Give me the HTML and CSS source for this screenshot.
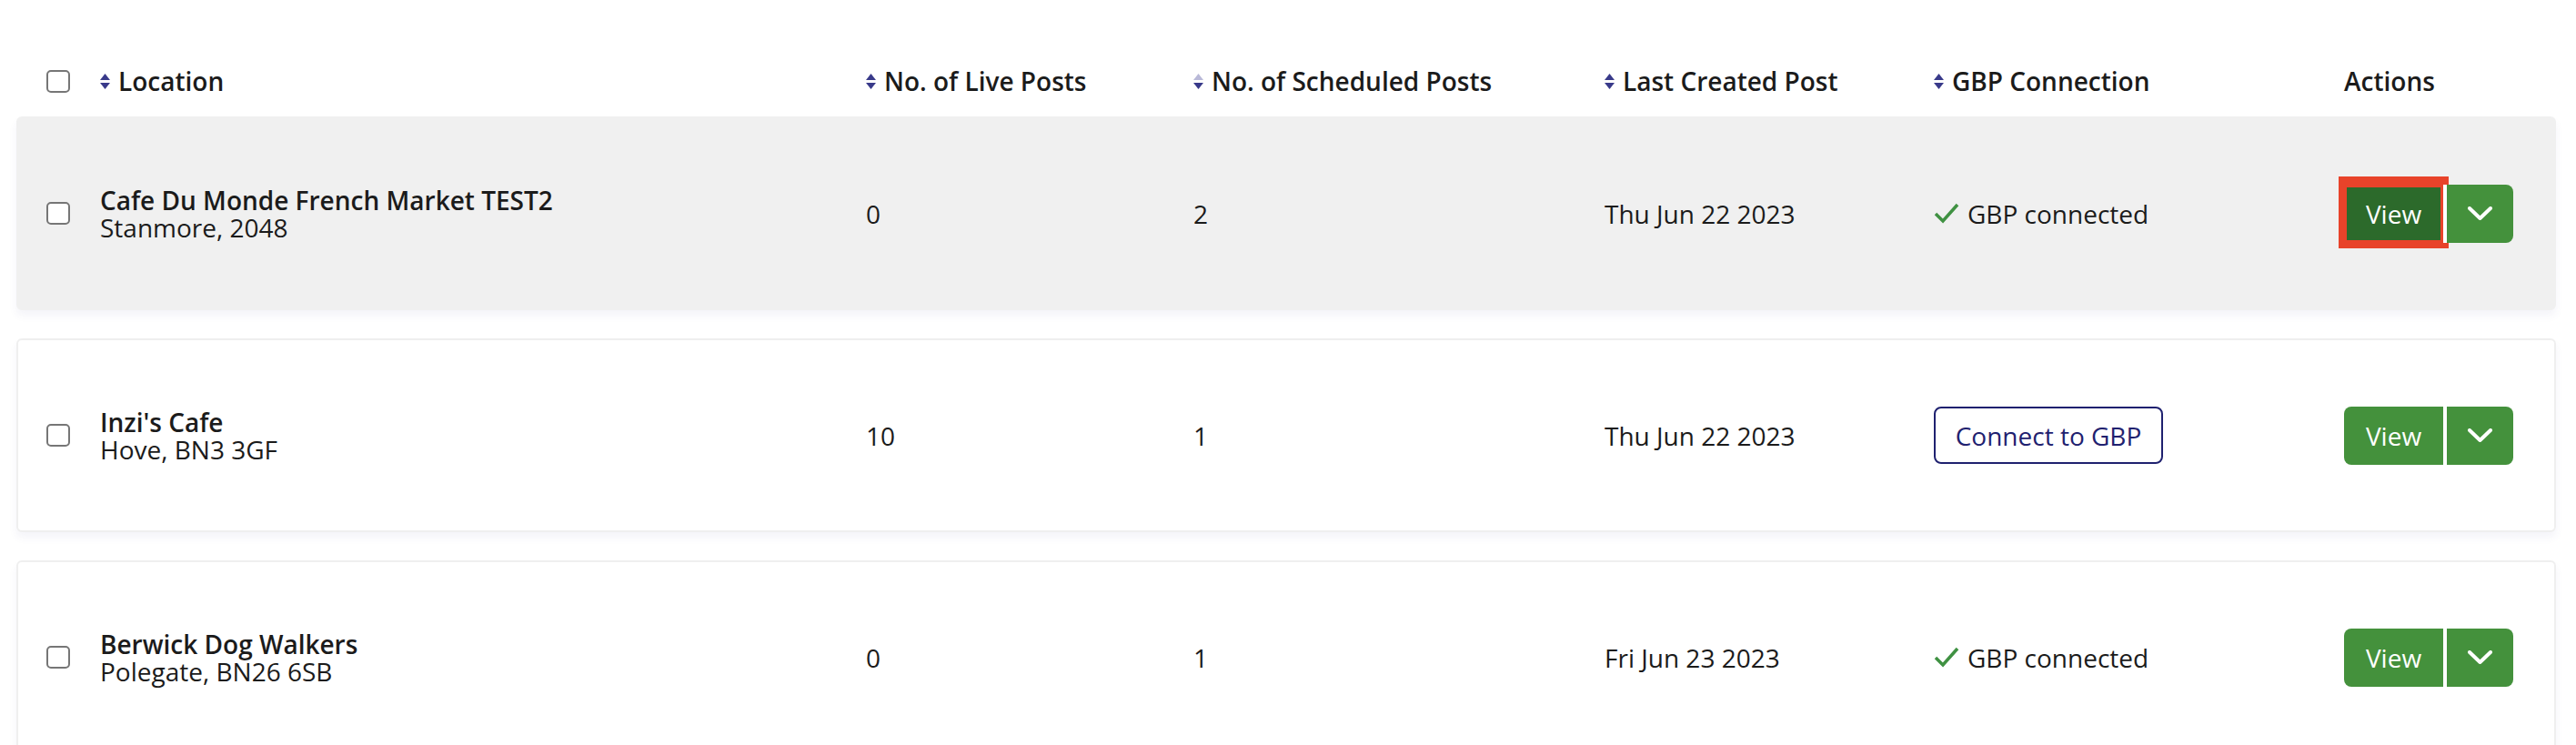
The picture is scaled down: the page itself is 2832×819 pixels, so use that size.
FILE: index.html
```html
<!DOCTYPE html>
<html lang="en">
<head>
<meta charset="UTF-8">
<title>Locations</title>
<link rel="stylesheet" href="styles.css">
</head>
<body>

<div class="page">
  <div class="grid table-head">
    <div><input type="checkbox" class="check"></div>
    <div class="th">
      <svg class="sort" viewBox="0 0 11 17"><path class="up" d="M0 7 L5.5 0 L11 7 Z"/><path class="down" d="M0 10 L11 10 L5.5 17 Z"/></svg>
      Location
    </div>
    <div class="th">
      <svg class="sort" viewBox="0 0 11 17"><path class="up" d="M0 7 L5.5 0 L11 7 Z"/><path class="down" d="M0 10 L11 10 L5.5 17 Z"/></svg>
      No. of Live Posts
    </div>
    <div class="th">
      <svg class="sort sorted" viewBox="0 0 11 17"><path class="up" d="M0 7 L5.5 0 L11 7 Z"/><path class="down" d="M0 10 L11 10 L5.5 17 Z"/></svg>
      No. of Scheduled Posts
    </div>
    <div class="th">
      <svg class="sort" viewBox="0 0 11 17"><path class="up" d="M0 7 L5.5 0 L11 7 Z"/><path class="down" d="M0 10 L11 10 L5.5 17 Z"/></svg>
      Last Created Post
    </div>
    <div class="th">
      <svg class="sort" viewBox="0 0 11 17"><path class="up" d="M0 7 L5.5 0 L11 7 Z"/><path class="down" d="M0 10 L11 10 L5.5 17 Z"/></svg>
      GBP Connection
    </div>
    <div class="th">Actions</div>
  </div>

  <!-- fila con hover -->
  <div class="grid row row-hover">
    <div><input type="checkbox" class="check"></div>
    <div class="loc">
      <div class="loc-name">Cafe Du Monde French Market TEST2</div>
      <div class="loc-addr">Stanmore, 2048</div>
    </div>
    <div>0</div>
    <div>2</div>
    <div>Thu Jun 22 2023</div>
    <div class="gbp">
      <svg class="tick" viewBox="0 0 28 23"><polyline points="2,12 10,20 26,2"/></svg>
      GBP connected
    </div>
    <div class="split">
      <button class="btn-view active">View</button>
      <button class="btn-toggle"><svg viewBox="0 0 27 15"><polyline points="2,2 13.5,13 25,2"/></svg></button>
    </div>
  </div>

  <div class="grid row">
    <div><input type="checkbox" class="check"></div>
    <div class="loc">
      <div class="loc-name">Inzi's Cafe</div>
      <div class="loc-addr">Hove, BN3 3GF</div>
    </div>
    <div>10</div>
    <div>1</div>
    <div>Thu Jun 22 2023</div>
    <div><button class="btn-connect">Connect to GBP</button></div>
    <div class="split">
      <button class="btn-view">View</button>
      <button class="btn-toggle"><svg viewBox="0 0 27 15"><polyline points="2,2 13.5,13 25,2"/></svg></button>
    </div>
  </div>

  <div class="grid row">
    <div><input type="checkbox" class="check"></div>
    <div class="loc">
      <div class="loc-name">Berwick Dog Walkers</div>
      <div class="loc-addr">Polegate, BN26 6SB</div>
    </div>
    <div>0</div>
    <div>1</div>
    <div>Fri Jun 23 2023</div>
    <div class="gbp">
      <svg class="tick" viewBox="0 0 28 23"><polyline points="2,12 10,20 26,2"/></svg>
      GBP connected
    </div>
    <div class="split">
      <button class="btn-view">View</button>
      <button class="btn-toggle"><svg viewBox="0 0 27 15"><polyline points="2,2 13.5,13 25,2"/></svg></button>
    </div>
  </div>
</div>

</body>
</html>
```

FILE: styles.css
```css
body {
  margin: 0;
  background: #fff;
  color: #1b1b1b;
  font-family: "Open Sans", "Liberation Sans", sans-serif;
  font-size: 28px;
  line-height: 30px;
}

.page {
  padding: 50px 22px 0 18px;
}

.grid {
  display: grid;
  grid-template-columns: 59px 842px 360px 452px 362px 451px 1fr;
  align-items: center;
  padding-left: 33px;
}

.table-head {
  height: 78px;
  font-weight: 600;
}

.th {
  display: flex;
  align-items: center;
  gap: 9px;
}

.sort {
  width: 11px;
  height: 17px;
  flex-shrink: 0;
}
.sort path { fill: #393a8a; }
.sort.sorted .up { fill: #b9b9d8; }

.check {
  appearance: none;
  display: block;
  margin: 0;
  width: 26px;
  height: 25px;
  border: 2px solid #767676;
  border-radius: 5px;
  background: #fff;
}

.row {
  box-sizing: border-box;
  height: 213px;
  margin-bottom: 31px;
  padding-left: 31px;
  border: 2px solid #efefef;
  border-radius: 6px;
  background: #fff;
  box-shadow: 0 6px 10px rgba(70, 70, 150, 0.06);
}

.row-hover {
  background: #f0f0f0;
  border-color: #f0f0f0;
}

.loc-name { font-weight: 600; }

.gbp {
  display: flex;
  align-items: center;
  gap: 9px;
}

.tick {
  width: 28px;
  height: 23px;
}
.tick polyline {
  fill: none;
  stroke: #3f9142;
  stroke-width: 3.5;
}

.btn-connect {
  box-sizing: border-box;
  width: 252px;
  height: 63px;
  padding: 0;
  border: 2px solid #1f216f;
  border-radius: 8px;
  background: #fff;
  color: #1f216f;
  font: inherit;
}

.split {
  display: flex;
}

.btn-view,
.btn-toggle {
  box-sizing: border-box;
  height: 64px;
  padding: 0;
  border: none;
  background: #44913c;
  color: #fff;
  font: inherit;
}

.btn-view {
  width: 109px;
  border-radius: 8px 0 0 8px;
}

.btn-view.active {
  background: #2c6a2b;
  border-radius: 0;
  box-shadow: 0 0 0 6px #e8432a, 0 -3px 0 6px #e8432a, inset 0 0 0 3px #e8432a;
}

.btn-toggle {
  width: 77px;
  border-left: 4px solid #fff;
  border-radius: 0 8px 8px 0;
  display: flex;
  align-items: center;
  justify-content: center;
}

.btn-toggle svg {
  width: 27px;
  height: 15px;
}
.btn-toggle polyline {
  fill: none;
  stroke: #fff;
  stroke-width: 4;
  stroke-linecap: round;
  stroke-linejoin: round;
}
```
